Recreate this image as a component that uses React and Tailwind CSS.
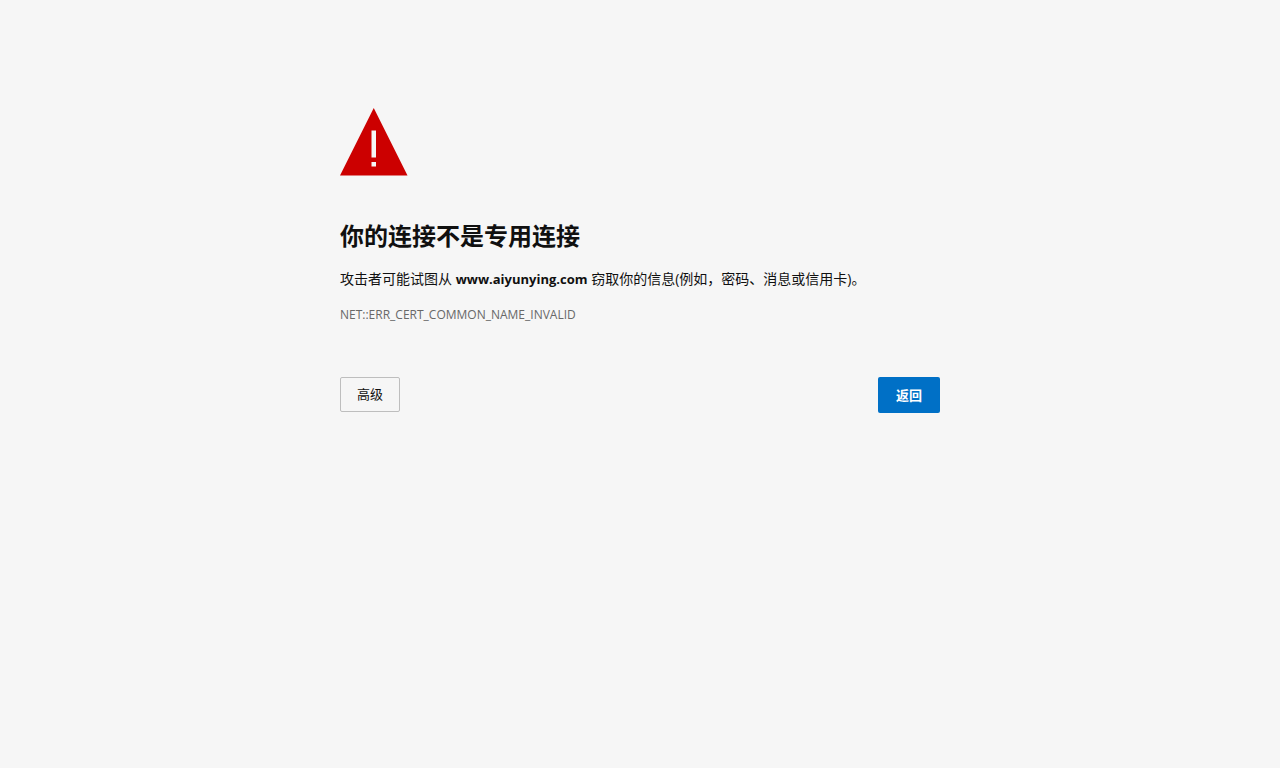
import React from "react";

function WarningIcon() {
    return (
        <svg className="block size-[68px]" viewBox="0 0 68 68" role="img" aria-label="警告">
            <path d="M33.750 0 67.500 67.500H0Z" fill="#cc0000" />
            <path d="M31.500 22.500H36V49.500H31.500zM31.500 54H36v4.500h-4.500z" fill="#f6f6f6" />
        </svg>
    );
}

export default function App() {
    return (
        <div className="min-h-screen bg-[#f6f6f6] px-5 pt-27 text-[#101010] font-['Open_Sans','Noto_Sans_CJK_SC',sans-serif]">
            <main lang="zh-CN" className="mx-auto w-full max-w-[600px]">
                <WarningIcon />
                <h1 className="mt-11 text-2xl leading-8 font-bold">你的连接不是专用连接</h1>
                <p className="mt-[17px] text-sm leading-5">
                    攻击者可能试图从 <strong className="text-[13px]">www.aiyunying.com</strong> 窃取你的信息(例如，密码、消息或信用卡)。
                </p>
                <p className="mt-4 text-xs leading-5 text-[#686868]">NET::ERR_CERT_COMMON_NAME_INVALID</p>
                <div className="mt-13 flex items-start justify-between">
                    <button type="button" className="rounded-xs border border-[#bebebe] px-4 py-2 text-[13px] leading-[17px]">
                        高级
                    </button>
                    <button type="button" className="rounded-xs bg-[#0070c6] px-[18px] py-[9px] text-[13px] leading-[18px] font-bold text-white">
                        返回
                    </button>
                </div>
            </main>
        </div>
    );
}
